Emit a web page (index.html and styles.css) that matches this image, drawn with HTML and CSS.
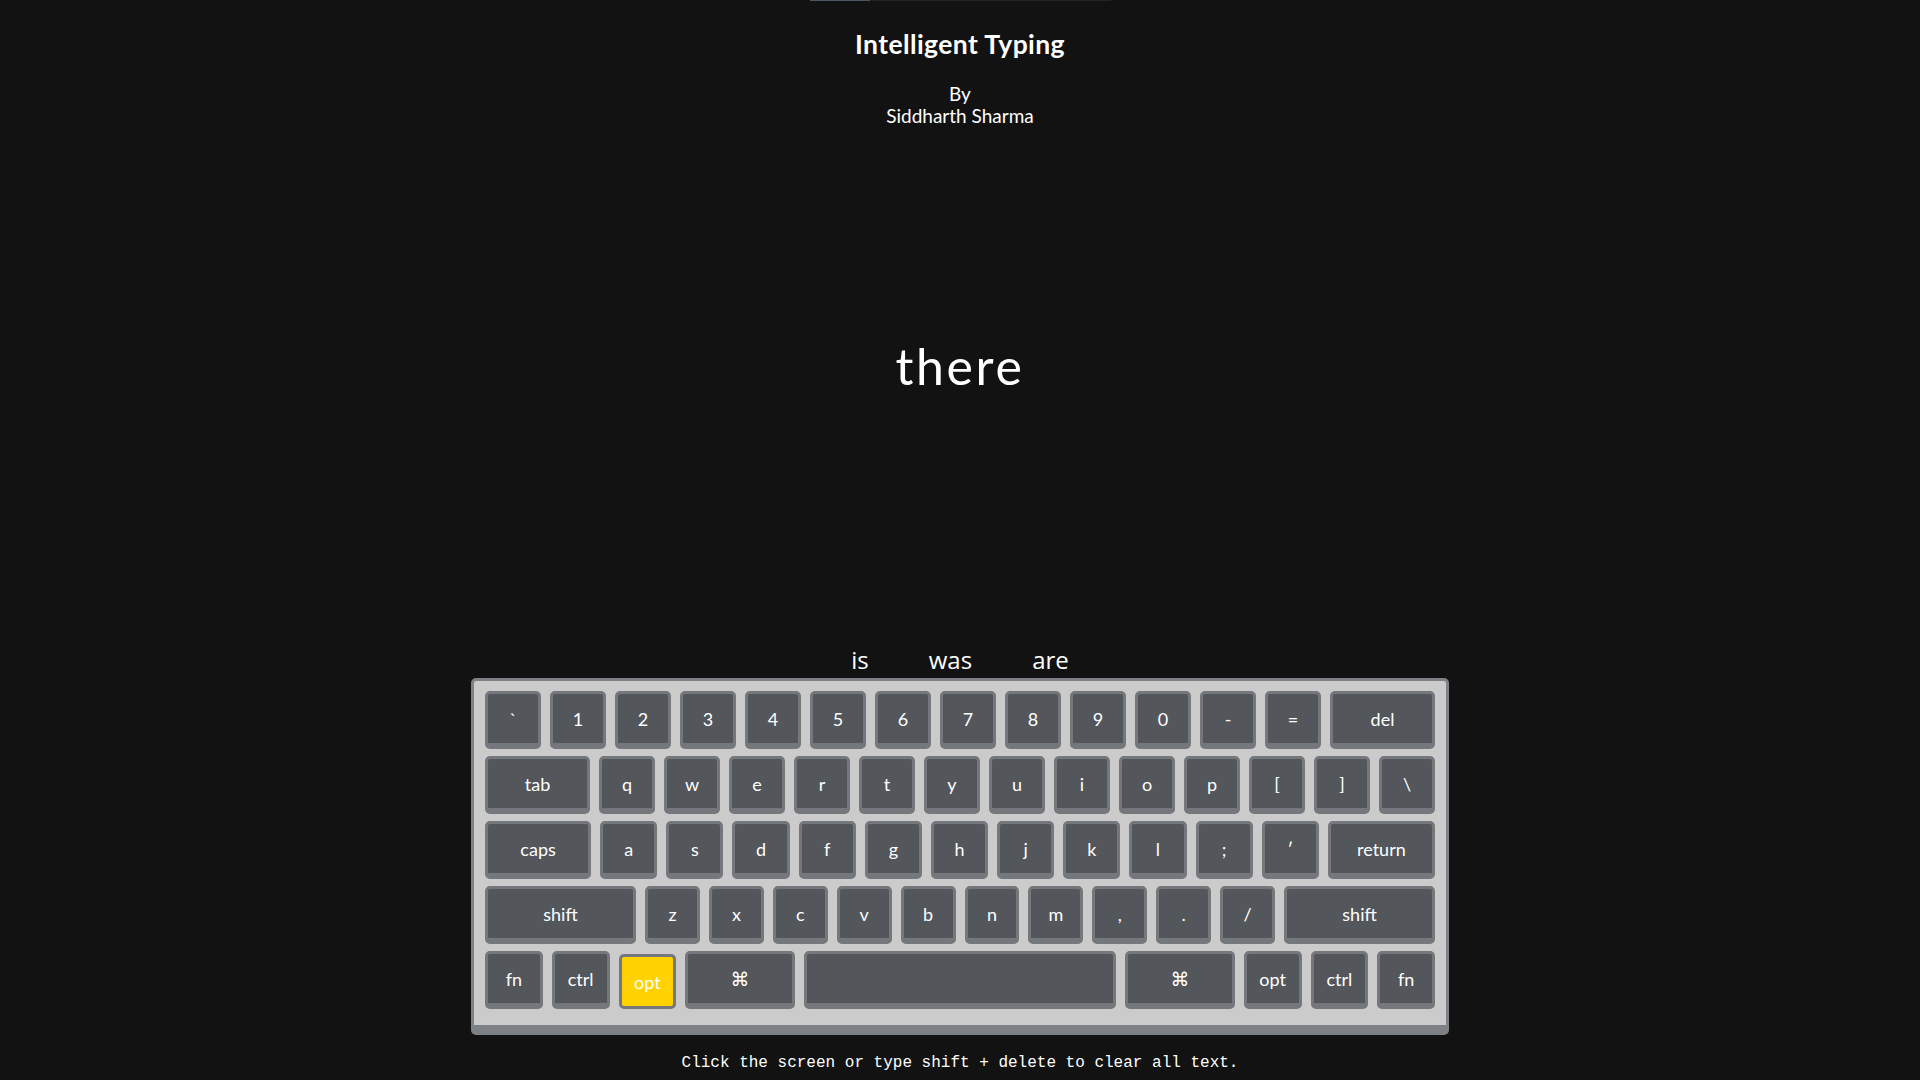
FILE: index.html
```html
<!DOCTYPE html>
<html lang="en">
<head>
<meta charset="utf-8">
<title>Intelligent Typing</title>
<link rel="stylesheet" href="styles.css">
</head>
<body>
<div class="page">
  <div class="progress-track"><div class="progress-fill"></div></div>
  <h1 class="title">Intelligent Typing</h1>
  <p class="byline">By<br>Siddharth Sharma</p>
  <div class="stage">
    <div class="typed">there</div>
  </div>
  <div class="suggestions">
    <span class="suggestion">is</span>
    <span class="suggestion">was</span>
    <span class="suggestion">are</span>
  </div>
  <div class="keyboard">
    <div class="row">
      <div class="key">`</div><div class="key">1</div><div class="key">2</div><div class="key">3</div><div class="key">4</div><div class="key">5</div><div class="key">6</div><div class="key">7</div><div class="key">8</div><div class="key">9</div><div class="key">0</div><div class="key">-</div><div class="key">=</div><div class="key key--wide">del</div>
    </div>
    <div class="row">
      <div class="key key--wide">tab</div><div class="key">q</div><div class="key">w</div><div class="key">e</div><div class="key">r</div><div class="key">t</div><div class="key">y</div><div class="key">u</div><div class="key">i</div><div class="key">o</div><div class="key">p</div><div class="key">[</div><div class="key">]</div><div class="key">\</div>
    </div>
    <div class="row">
      <div class="key key--caps">caps</div><div class="key key--mid">a</div><div class="key key--mid">s</div><div class="key key--mid">d</div><div class="key key--mid">f</div><div class="key key--mid">g</div><div class="key key--mid">h</div><div class="key key--mid">j</div><div class="key key--mid">k</div><div class="key key--mid">l</div><div class="key key--mid">;</div><div class="key key--mid">′</div><div class="key key--return">return</div>
    </div>
    <div class="row">
      <div class="key key--shift">shift</div><div class="key key--low">z</div><div class="key key--low">x</div><div class="key key--low">c</div><div class="key key--low">v</div><div class="key key--low">b</div><div class="key key--low">n</div><div class="key key--low">m</div><div class="key key--low">,</div><div class="key key--low">.</div><div class="key key--low">/</div><div class="key key--shift">shift</div>
    </div>
    <div class="row">
      <div class="key key--mod">fn</div><div class="key key--mod">ctrl</div><div class="key key--mod key--active">opt</div><div class="key key--cmd">⌘</div><div class="key key--space"></div><div class="key key--cmd">⌘</div><div class="key key--mod">opt</div><div class="key key--mod">ctrl</div><div class="key key--mod">fn</div>
    </div>
  </div>
  <p class="hint">Click the screen or type shift + delete to clear all text.</p>
</div>
</body>
</html>
```
FILE: styles.css
```css
html, body {
  margin: 0;
  padding: 0;
  background: #121212;
}
body {
  font-family: "Lato", "Open Sans", sans-serif;
  color: #ffffff;
}
.page {
  width: 1920px;
  height: 1080px;
  display: flex;
  flex-direction: column;
  align-items: center;
  overflow: hidden;
}
.progress-track {
  width: 301px;
  height: 1px;
  background: #232323;
  display: flex;
}
.progress-fill {
  width: 60px;
  height: 1px;
  background: #4b5566;
}
.title {
  margin: 28px 0 0;
  font-size: 26.5px;
  line-height: 30px;
  font-weight: 700;
  letter-spacing: 0.4px;
}
.byline {
  margin: 24px 0 0;
  font-size: 19px;
  line-height: 22px;
  text-align: center;
}
.stage {
  height: 518px;
  padding-top: 210px;
  box-sizing: border-box;
}
.typed {
  font-size: 50px;
  line-height: 58px;
  letter-spacing: 2.6px;
}
.suggestions {
  height: 30px;
  margin-bottom: 3px;
  display: flex;
  gap: 60px;
  font-family: "Open Sans", "Lato", sans-serif;
  font-size: 24px;
  line-height: 30px;
}
.keyboard {
  width: 978px;
  box-sizing: border-box;
  background: #cbcbcb;
  border: 3px solid #7d8084;
  border-bottom-width: 10px;
  border-radius: 5px;
  padding: 10px 11px 16px;
  display: flex;
  flex-direction: column;
  gap: 7px;
}
.row {
  display: flex;
  gap: 9px;
  align-items: flex-start;
  height: 58px;
}
.key {
  flex: 50 1 0;
  height: 58px;
  box-sizing: border-box;
  background: #53565a;
  border: 3px solid #74777b;
  border-bottom-width: 6px;
  border-radius: 5px;
  display: flex;
  align-items: center;
  justify-content: center;
  font-size: 18px;
  color: #ffffff;
}
.key--wide { flex-grow: 99; }
.key--mid { flex-grow: 51.1; }
.key--caps { flex-grow: 100; }
.key--return { flex-grow: 101; }
.key--low { flex-grow: 48.9; }
.key--shift { flex-grow: 145; }
.key--mod { flex-grow: 52; }
.key--cmd { flex-grow: 104; font-family: "DejaVu Sans", sans-serif; font-size: 19px; }
.key--space { flex-grow: 308; }
.key--active {
  background: #ffd200;
  border-bottom-width: 3px;
  height: 55px;
  margin-top: 3px;
}
.hint {
  margin: 18px 0 0;
  font-family: "Liberation Mono", "DejaVu Sans Mono", monospace;
  font-size: 16px;
  line-height: 20px;
}
```
